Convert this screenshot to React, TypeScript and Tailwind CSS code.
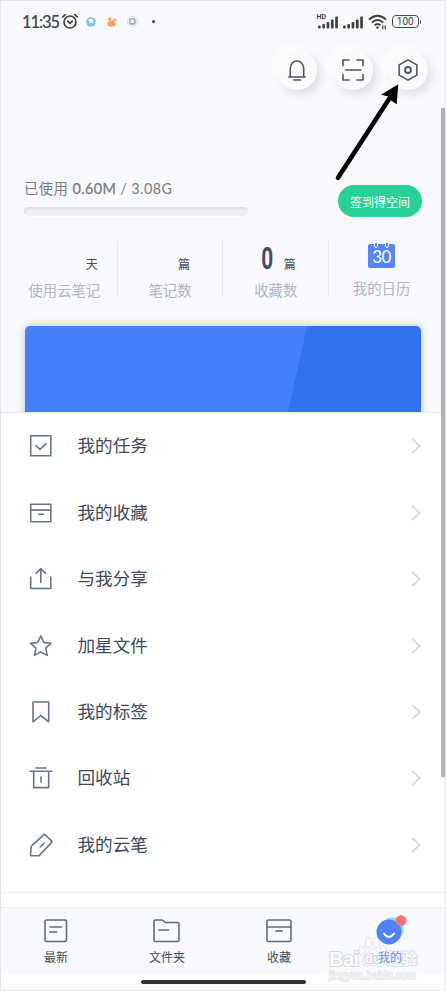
import React from 'react';

const menuItems = [
  { label: '我的任务', icon: <TaskIcon /> },
  { label: '我的收藏', icon: <ArchiveIcon /> },
  { label: '与我分享', icon: <ShareIcon /> },
  { label: '加星文件', icon: <StarIcon /> },
  { label: '我的标签', icon: <BookmarkIcon /> },
  { label: '回收站', icon: <TrashIcon /> },
  { label: '我的云笔', icon: <PenIcon /> },
];

const stats = [
  { count: '', unit: '天', label: '使用云笔记' },
  { count: '', unit: '篇', label: '笔记数' },
  { count: '0', unit: '篇', label: '收藏数' },
];

function Icon({ children, className = '' }: { children: React.ReactNode; className?: string }) {
  return (
    <svg
      width="24"
      height="24"
      viewBox="0 0 24 24"
      fill="none"
      stroke="currentColor"
      strokeWidth="1.6"
      strokeLinecap="round"
      strokeLinejoin="round"
      className={className}
    >
      {children}
    </svg>
  );
}

function TaskIcon() {
  return (
    <Icon>
      <path d="M1.7 1.7h20.1v20.1H1.7z" strokeLinejoin="miter" />
      <path d="M7 11.5l4 3.8 6-5.6" />
    </Icon>
  );
}

function ArchiveIcon() {
  return (
    <Icon>
      <path d="M1.7 3.3h20.1v17.5H1.7zM1.7 9.1h20.1M9.7 13.2h4.6" />
    </Icon>
  );
}

function ShareIcon() {
  return (
    <Icon>
      <path d="M1.7 10v11.5h20.1V10M11.8 15.5V1.8M7 6.3l4.8-4.6 4.8 4.6" />
    </Icon>
  );
}

function StarIcon() {
  return (
    <Icon>
      <path d="M11.8 1.9l3 6.5 7.2.9-5.3 4.8 1.5 7.3-6.4-3.5-6.4 3.5 1.5-7.3L1.6 9.3l7.2-.9z" />
    </Icon>
  );
}

function BookmarkIcon() {
  return (
    <Icon>
      <path d="M4 2h15.7v19.8l-7.9-6.3L4 21.8z" />
    </Icon>
  );
}

function TrashIcon() {
  return (
    <Icon>
      <path d="M1 5.2h22M7 2h10.2M4.7 5.2v16.4h15V5.2M12 11v5" />
    </Icon>
  );
}

function PenIcon() {
  return (
    <Icon>
      <path d="M14.9 1.7q.6-.6 1.2 0l6.6 6.4q.6.6 0 1.3L10.4 22.4q-.4.4-1 .4H2.3q-.8 0-.8-.9l.7-8q0-.6.5-1z" />
      <path d="M11.2 14l4.2-4" />
    </Icon>
  );
}

function Signal() {
  return (
    <svg width="20" height="13" viewBox="0 0 20 13" fill="#3f4041">
      <rect x="0" y="9.5" width="2.7" height="3" rx="1" />
      <rect x="4.3" y="8" width="2.7" height="4.5" rx="1" />
      <rect x="8.6" y="6" width="2.7" height="6.5" rx="1" />
      <rect x="12.9" y="3.5" width="2.7" height="9" rx="1" />
      <rect x="17.2" y="0.5" width="2.7" height="12" rx="1" />
    </svg>
  );
}

function StatusBar() {
  return (
    <div className="flex h-[41px] items-center pl-[21px] pr-[24px] text-[#3f4041]">
      <span className="w-[40px] font-['Lato','Noto_Sans_CJK_SC',sans-serif] text-[16.5px] leading-5 tracking-[-1.1px] whitespace-nowrap [-webkit-text-stroke:0.2px]">
        11:35
      </span>
      <svg width="16" height="16" viewBox="0 0 16 16" fill="none" stroke="currentColor" strokeWidth="1.7" strokeLinecap="round">
        <circle cx="8" cy="8" r="6" />
        <path d="M.9 2.8L3.4.4M15.1 2.8L12.6.4M5.6 7.2L8 9.3l2.4-2.1" />
      </svg>
      <svg width="10" height="10" viewBox="0 0 10 10" className="ml-[8px]">
        <circle cx="5" cy="5" r="4.8" fill="#76caf0" />
        <path d="M2.3 2.2l3.2-.7 2 2.2-.6 2.6-1.6-.8-1.6 1.3-.2-2z" fill="#fff" />
      </svg>
      <svg width="10" height="10" viewBox="0 0 10 10" className="ml-[11px]" fill="#f8a365">
        <path d="M1 .8C3 .1 4.8 1 4.3 2.8L3.2 5.1C4.4 3.5 6.1 2.8 7.1 2.4l.5-1.6.8 1.4 1.3 1.5-2 .8C9.2 5.8 9.2 8.7 7 9.5H2.1C.5 8.8 0 7.3.7 5.6l1.6-2.8L.8 2.4z" />
      </svg>
      <svg width="11" height="11" viewBox="0 0 11 11" fill="none" className="ml-[10px]">
        <circle cx="5.5" cy="5.5" r="5" stroke="#f1c9a9" strokeWidth=".8" />
        <circle cx="5.4" cy="5.4" r="2.7" stroke="#70a9dc" strokeWidth="1.3" />
        <path d="M6.5 7h2.4" stroke="#e2bd54" />
      </svg>
      <span className="ml-[14px] size-[3px] rounded-full bg-current" />
      <div className="relative ml-auto mt-[2px]">
        <span className="absolute -left-[1px] -top-[2px] font-['Roboto',sans-serif] text-[7px] leading-none font-bold">HD</span>
        <Signal />
      </div>
      <span className="ml-[5px] mt-[2px]">
        <Signal />
      </span>
      <svg width="20" height="16" viewBox="0 0 20 16" fill="none" stroke="currentColor" strokeWidth="1.9" className="ml-[5px]">
        <path d="M1 5.6q8.5-7.8 17 0M3.8 8.6q5.7-5.2 11.4 0M6.5 11.3q3-2.5 6 0" />
        <path d="M9.5 15.2L7.7 13q1.8-1.2 3.6 0z" fill="currentColor" stroke="none" />
        <path d="M14.8 11.3v4M17.2 11.3v4" strokeWidth="1.2" />
      </svg>
      <div className="ml-[4.5px] flex h-[13px] w-[26.5px] items-center justify-center rounded-[4px] border-[1.5px] border-[#4a4b4c] font-['Roboto',sans-serif] text-[10px] leading-none">
        100
      </div>
      <span className="ml-px h-1 w-[1.5px] rounded-r bg-[#4a4b4c]" />
    </div>
  );
}

function RoundButton({ children }: { children: React.ReactNode }) {
  return (
    <button className="flex size-[40px] items-center justify-center rounded-full bg-[#fbfbfd] text-[#4c5468] shadow-[4px_5px_9px_#dfe0e4,-4px_-4px_8px_#ffffff]">
      {children}
    </button>
  );
}

function TopActions() {
  return (
    <div className="mt-[8px] flex justify-end gap-[15.5px] pr-[17px]">
      <RoundButton>
        <Icon>
          <path d="M3.7 19H20.3M5.3 18.7V10.4a6.7 7.4 0 0 1 13.4 0v8.3M9 22h6.5" />
        </Icon>
      </RoundButton>
      <RoundButton>
        <Icon>
          <path d="M2 7.5V2h6M16 2h6v5.5M22 16.5V22h-6M8 22H2v-5.5M4.5 12h15.3" />
        </Icon>
      </RoundButton>
      <RoundButton>
        <Icon>
          <path d="M12 1.9l8.9 5v10.2l-8.9 5-8.9-5V6.9z" />
          <circle cx="12" cy="12" r="3" strokeWidth="1.8" />
        </Icon>
      </RoundButton>
    </div>
  );
}

function CalendarIcon() {
  return (
    <div className="relative h-[24px] w-[27px] rounded-[2px] bg-[#5484f9] text-center font-['Lato',sans-serif] text-[17px] leading-[26px] tracking-[-0.6px] text-white">
      30
      <span className="absolute -top-[2px] left-[6px] h-[6px] w-[4px] rounded-b-sm border border-[#f8f9fc] bg-[#5484f9]" />
      <span className="absolute -top-[2px] right-[6px] h-[6px] w-[4px] rounded-b-sm border border-[#f8f9fc] bg-[#5484f9]" />
    </div>
  );
}

function Storage() {
  return (
    <div className="mt-[86px] flex h-[42px] items-start justify-between pl-[23px] pr-[23px]">
      <div>
        <p className="font-['Lato','Noto_Sans_CJK_SC',sans-serif] text-[14.4px] leading-[26px] tracking-[0.4px] text-[#7b7d83]">
          已使用 <span className="[-webkit-text-stroke:0.3px]">0.60M</span> / 3.08G
        </p>
        <div className="mt-[5px] h-[9px] w-[224px] rounded-full bg-[#efeff1] shadow-[inset_1px_2px_2px_#dedfe1,0_1px_1px_#ffffff]" />
      </div>
      <button className="mt-[9px] h-[32px] w-[84px] shrink-0 rounded-full bg-[#27d095] text-[12px] leading-[31px] text-white">
        签到得空间
      </button>
    </div>
  );
}

function StatsRow() {
  return (
    <div className="mt-[23px] flex h-[58px] pl-[11px]">
      {stats.map((stat) => (
        <div key={stat.label} className="h-[55px] w-[105.7px] border-r border-[#e4e6e9] text-center">
          <div className="flex h-[35px] items-end justify-center text-[#454c60]">
            <span className="flex w-[24px] justify-center pr-[2px] pb-[1px] font-['Roboto',sans-serif] text-[32px] leading-[34px] font-bold">
              <span className="inline-block scale-x-[0.65]">{stat.count}</span>
            </span>
            <span className={stat.unit === '天' ? 'ml-[31px] text-[12px] leading-[24px]' : 'ml-[4px] text-[12px] leading-[24px]'}>
              {stat.unit}
            </span>
          </div>
          <p className="text-[14.4px] leading-[27px] text-[#b1b5bc]">{stat.label}</p>
        </div>
      ))}
      <div className="flex w-[105px] flex-col items-center pt-[3px]">
        <CalendarIcon />
        <p className="mt-[6px] text-[14.4px] leading-[27px] text-[#b1b5bc]">我的日历</p>
      </div>
    </div>
  );
}

function Banner() {
  return (
    <div className="h-[114px] overflow-hidden border-b border-[#e8eaed] px-[24px] pt-[27px]">
      <div className="h-[110px] w-[396px] rounded-[5px] bg-[linear-gradient(102.5deg,#4380fe_67%,#3172ef_67.2%)] shadow-[0_0_9px_#b9c7da]" />
    </div>
  );
}

function Menu() {
  return (
    <div className="h-[480px] border-b border-[#eceded] bg-white">
      {menuItems.map((item) => (
        <button key={item.label} className="flex h-[66.44px] w-full items-center pl-[28px] pr-[24px] text-left">
          <span className="text-[#68758c]">{item.icon}</span>
          <span className="-mt-[2px] ml-[24.5px] text-[17.6px] leading-6 text-[#41485a]">{item.label}</span>
          <svg width="10" height="16" viewBox="0 0 10 16" fill="none" stroke="#d5d6d7" strokeWidth="1.7" className="ml-auto">
            <path d="M1 .8L8.8 8 1 15.2" />
          </svg>
        </button>
      ))}
    </div>
  );
}

function BottomNav() {
  return (
    <nav className="mt-[14px] flex h-[66px] border-t border-[#eceef1] bg-[#f8f9fc] pt-[11px] text-[12px] leading-[20px] text-[#454952]">
      <div className="flex w-[110px] flex-col items-center">
        <Icon className="text-[#626a7b]">
          <rect x="1" y="1" width="21.5" height="21.5" rx="1.5" />
          <path d="M6 8h11.5M6 13h6.5" />
        </Icon>
        <span className="mt-[4px]">最新</span>
      </div>
      <div className="flex w-[112px] flex-col items-center">
        <svg width="28" height="24" viewBox="0 0 28 24" fill="none" stroke="#626a7b" strokeWidth="1.6" strokeLinecap="round" strokeLinejoin="round">
          <path d="M2.5 1h6.8l3 2.5h12.2q1.5 0 1.5 1.5v16q0 1.5-1.5 1.5h-22Q1 22.5 1 21V2.5Q1 1 2.5 1zM6 11h9.5" />
        </svg>
        <span className="mt-[4px]">文件夹</span>
      </div>
      <div className="flex w-[112px] flex-col items-center">
        <svg width="26" height="24" viewBox="0 0 26 24" fill="none" stroke="#626a7b" strokeWidth="1.6" strokeLinecap="round">
          <rect x="1" y="1" width="24" height="21.5" rx="1.5" />
          <path d="M1 8h24M9.8 12h6.5" />
        </svg>
        <span className="mt-[4px]">收藏</span>
      </div>
      <div className="flex w-[110px] flex-col items-center">
        <svg width="32" height="30" viewBox="0 0 32 30" className="-mt-[4px] overflow-visible">
          <circle cx="18" cy="14" r="11.5" fill="#80e7c8" />
          <circle cx="15" cy="17" r="12.5" fill="#5282fb" />
          <circle cx="27" cy="5.7" r="5.5" fill="#ff7476" />
          <path d="M10 18.5q5 7 10 0" fill="none" stroke="#fff" strokeWidth="2" strokeLinecap="round" />
        </svg>
        <span className="relative z-10 mt-[2px] text-[#6d91fb]">我的</span>
      </div>
    </nav>
  );
}

function Watermark() {
  return (
    <div className="absolute left-[328px] top-[936px] h-[44px] w-[92px] font-['Liberation_Sans','Noto_Sans_CJK_SC',sans-serif] text-[#fafbfd] [paint-order:stroke_fill] [-webkit-text-stroke:2px_#d6d8db]">
      <svg width="30" height="31" viewBox="0 0 30 31" fill="#f8f9fc" stroke="#d2d4d8" strokeWidth="1.2" className="absolute left-[29px] top-0">
        <ellipse cx="4" cy="14" rx="2.8" ry="4" />
        <ellipse cx="10.5" cy="5.5" rx="3" ry="4.8" />
        <ellipse cx="18.5" cy="6" rx="3" ry="4.8" />
        <ellipse cx="25.5" cy="13" rx="2.8" ry="4" />
        <path d="M14.5 12c-3 0-4 4-7 7-5 4.500-2 11 3 9.500h9c7 1.500 9-4 4.500-8.500-4-3-5-8-9.500-8z" />
      </svg>
      <div className="relative flex pt-[12px] leading-[20px] font-bold whitespace-nowrap">
        <span className="w-[33px] text-[20px] tracking-[-0.5px]">Bai</span>
        <span className="w-[25px] pl-[3px] text-[13px]">du</span>
        <span className="text-[15px] opacity-80">经验</span>
      </div>
      <p className="text-[10.8px] leading-[12px] whitespace-nowrap [-webkit-text-stroke:1.400px_#dddfe2]">jingyan.baidu.com</p>
    </div>
  );
}

export default function App() {
  return (
    <div className="relative h-[991px] w-[446px] overflow-hidden border border-[#e5e6e8] bg-[#f8f9fc] font-['Noto_Sans_CJK_SC',sans-serif]">
      <StatusBar />
      <TopActions />
      <Storage />
      <StatsRow />
      <Banner />
      <div className="bg-white">
        <Menu />
        <BottomNav />
        <div className="flex h-[20px] justify-center pt-[7px]">
          <span className="h-[4px] w-[165px] rounded-full bg-[#303132]" />
        </div>
      </div>

      {/* Scroll thumb */}
      <span className="absolute -right-px top-[107px] h-[669px] w-[5px] bg-[#b3b3b3]" />

      {/* Pointer towards settings */}
      <svg width="72" height="100" viewBox="0 0 72 100" className="absolute left-[331px] top-[82px]">
        <path d="M6 94.7L59 13" stroke="#000" strokeWidth="4.6" strokeLinecap="round" />
        <path d="M66.3 1.3L49 11.7l6.7 1.5 3.6 4.5 5.4 3.6z" fill="#000" />
      </svg>
      <Watermark />
    </div>
  );
}
